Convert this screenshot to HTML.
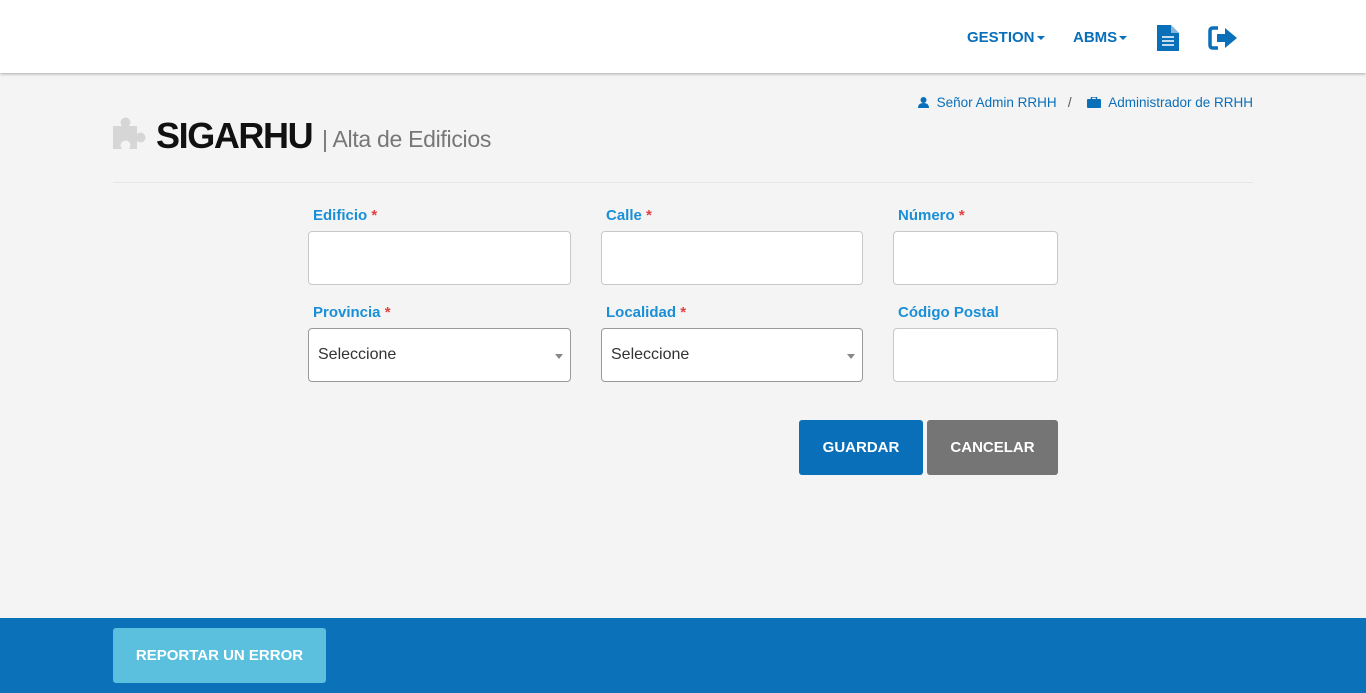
<!DOCTYPE html>
<html><head><meta charset="utf-8"><style>
*{box-sizing:border-box;margin:0;padding:0}
body{width:1366px;height:693px;background:#f4f4f4;font-family:"Liberation Sans",Arial,sans-serif;position:relative;overflow:hidden}
.hdr{position:absolute;left:0;top:0;width:1366px;height:73px;background:#fff;box-shadow:0 1px 3px rgba(0,0,0,.3)}
.nav{position:absolute;top:29px;font-size:15px;font-weight:bold;color:#0a6fb9}
.car{display:inline-block;border-left:4px solid transparent;border-right:4px solid transparent;border-top:4px solid #0a6fb9;vertical-align:middle;margin-left:2px}
.abs{position:absolute}
.lbl{position:absolute;font-size:15px;font-weight:bold;color:#1a8fd6}
.lbl span{color:#e04040}
.inp{position:absolute;background:#fff;border:1px solid #c8c8c8;border-radius:4px;height:54px}
.sel{border-color:#999;font-size:16px;color:#333;padding:17px 0 0 9px}
.sel:after{content:"";position:absolute;right:7px;top:25px;border-left:4px solid transparent;border-right:4px solid transparent;border-top:5px solid #888}
.btn{position:absolute;color:#fff;font-weight:bold;font-size:15px;text-align:center;border-radius:3px}
</style></head><body>
<div class="hdr">
<div class="nav" style="left:967px">GESTION<span class="car"></span></div>
<div class="nav" style="left:1073px">ABMS<span class="car"></span></div>
<svg class="abs" style="left:1157px;top:25px" width="22" height="26" viewBox="0 0 22 26"><path d="M0 0H14L22 8V26H0Z" fill="#0a6fb9"/><path d="M14 0V8H22" fill="#fff" opacity=".5"/><path d="M5 12H17M5 16H17M5 20H17" stroke="#fff" stroke-width="1.6"/></svg>
<svg class="abs" style="left:1208px;top:25px" width="30" height="26" viewBox="0 0 30 26"><path d="M10 3H5Q2 3 2 6V20Q2 23 5 23H10" fill="none" stroke="#0a6fb9" stroke-width="3.5"/><path d="M9 9H17V3L29 13L17 23V17H9Z" fill="#0a6fb9"/></svg>
</div>
<div class="abs" style="right:113px;top:95px;font-size:13.5px;color:#0a6fb9;white-space:nowrap">
<svg width="11" height="11" viewBox="0 0 11 11" style="vertical-align:-1px"><circle cx="5.5" cy="3" r="3" fill="#0a6fb9"/><path d="M0 11Q0 6 5.5 6Q11 6 11 11Z" fill="#0a6fb9"/></svg>
&nbsp;Señor Admin RRHH &nbsp;&nbsp;<span style="color:#555">/</span>&nbsp;&nbsp;&nbsp;
<svg width="14" height="11" viewBox="0 0 14 11" style="vertical-align:-1px"><rect x="0" y="2" width="14" height="9" rx="1" fill="#0a6fb9"/><rect x="4.5" y="0" width="5" height="3" fill="none" stroke="#0a6fb9" stroke-width="1.4"/></svg>
&nbsp;Administrador de RRHH</div>
<svg class="abs" style="left:113px;top:116px" width="36" height="34" viewBox="0 0 36 34"><path d="M0 10H9Q6 6 9 3Q13 0 16 3Q19 6 16 10H24V18Q28 15 31 18Q34 22 31 25Q28 28 24 25V33H16Q19 29 16 26Q13 23 9 26Q6 29 9 33H0Z" fill="#d6d6d6"/></svg>
<div class="abs" style="left:156px;top:115px;font-size:36px;letter-spacing:-1.4px;font-weight:bold;color:#111">SIGARHU</div>
<div class="abs" style="left:322px;top:126px;font-size:23px;color:#777;letter-spacing:-0.3px">| Alta de Edificios</div>
<div class="abs" style="left:113px;top:182px;width:1140px;height:1px;background:#e6e6e6"></div>

<div class="lbl" style="left:313px;top:207px">Edificio <span>*</span></div>
<div class="lbl" style="left:606px;top:207px">Calle <span>*</span></div>
<div class="lbl" style="left:898px;top:207px">Número <span>*</span></div>
<div class="inp" style="left:308px;top:231px;width:263px"></div>
<div class="inp" style="left:601px;top:231px;width:262px"></div>
<div class="inp" style="left:893px;top:231px;width:165px"></div>
<div class="lbl" style="left:313px;top:304px">Provincia <span>*</span></div>
<div class="lbl" style="left:606px;top:304px">Localidad <span>*</span></div>
<div class="lbl" style="left:898px;top:304px">Código Postal</div>
<div class="inp sel" style="left:308px;top:328px;width:263px">Seleccione</div>
<div class="inp sel" style="left:601px;top:328px;width:262px">Seleccione</div>
<div class="inp" style="left:893px;top:328px;width:165px"></div>
<div class="btn" style="left:799px;top:420px;width:124px;height:55px;line-height:55px;background:#0a6fb9">GUARDAR</div>
<div class="btn" style="left:927px;top:420px;width:131px;height:55px;line-height:55px;background:#757575">CANCELAR</div>

<div class="abs" style="left:0;top:618px;width:1366px;height:75px;background:#0b72ba"></div>
<div class="btn" style="left:113px;top:628px;width:213px;height:55px;line-height:55px;background:#5bc0de;font-size:15px">REPORTAR UN ERROR</div>
</body></html>
